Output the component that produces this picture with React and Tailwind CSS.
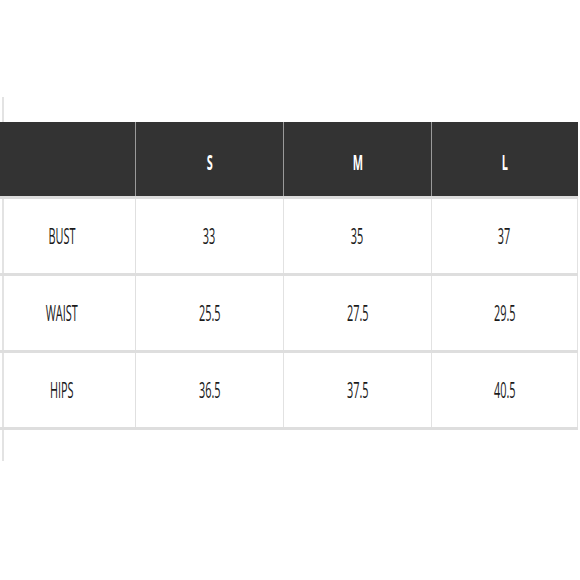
import React from 'react';

const sizes = ['S', 'M', 'L'];
const rows = [
  { label: 'BUST', values: ['33', '35', '37'] },
  { label: 'WAIST', values: ['25.5', '27.5', '29.5'] },
  { label: 'HIPS', values: ['36.5', '37.5', '40.5'] },
];

const cols = 'grid grid-cols-[136px_148px_148px_146px]';

// squeezed text, the chart image is stretched vertically
const Squeeze = ({ children, className = '' }) => (
  <span className={`inline-block scale-x-[0.52] ${className}`}>{children}</span>
);

export default function App() {
  return (
    <div className="w-[580px] h-[580px] bg-white font-['Open_Sans',sans-serif] pt-[97px]">
      <div className="ml-[2px] h-[364px] border-l-2 border-[#e3e3e3] pt-[25px]">
        <div className="-ml-[4px] w-[578px]">
          {/* header */}
          <div className={`${cols} h-[77px] bg-[#333333] border-b-[3px] border-[#dcdcdc]`}>
            <div className="border-r border-[#9a9a9a]" />
            {sizes.map((s, i) => (
              <div
                key={s}
                className={`flex items-center justify-center pt-[8px] text-white text-[21px] font-bold ${i < 2 ? 'border-r border-[#9a9a9a]' : ''}`}
              >
                <Squeeze>{s}</Squeeze>
              </div>
            ))}
          </div>

          {/* body rows */}
          {rows.map(({ label, values }) => (
            <div key={label} className={`${cols} h-[77px] border-b-[3px] border-[#dedede]`}>
              <div className="flex items-center justify-center pr-[12px] pt-[2px] text-[#1a1a1a] text-[21px] border-r border-[#e0e0e0]">
                <Squeeze>{label}</Squeeze>
              </div>
              {values.map((v, i) => (
                <div
                  key={i}
                  className="flex items-center justify-center pt-[2px] text-[#1a1a1a] text-[21px] border-r border-[#e2e2e2]"
                >
                  <Squeeze>{v}</Squeeze>
                </div>
              ))}
            </div>
          ))}
        </div>
      </div>
    </div>
  );
}
